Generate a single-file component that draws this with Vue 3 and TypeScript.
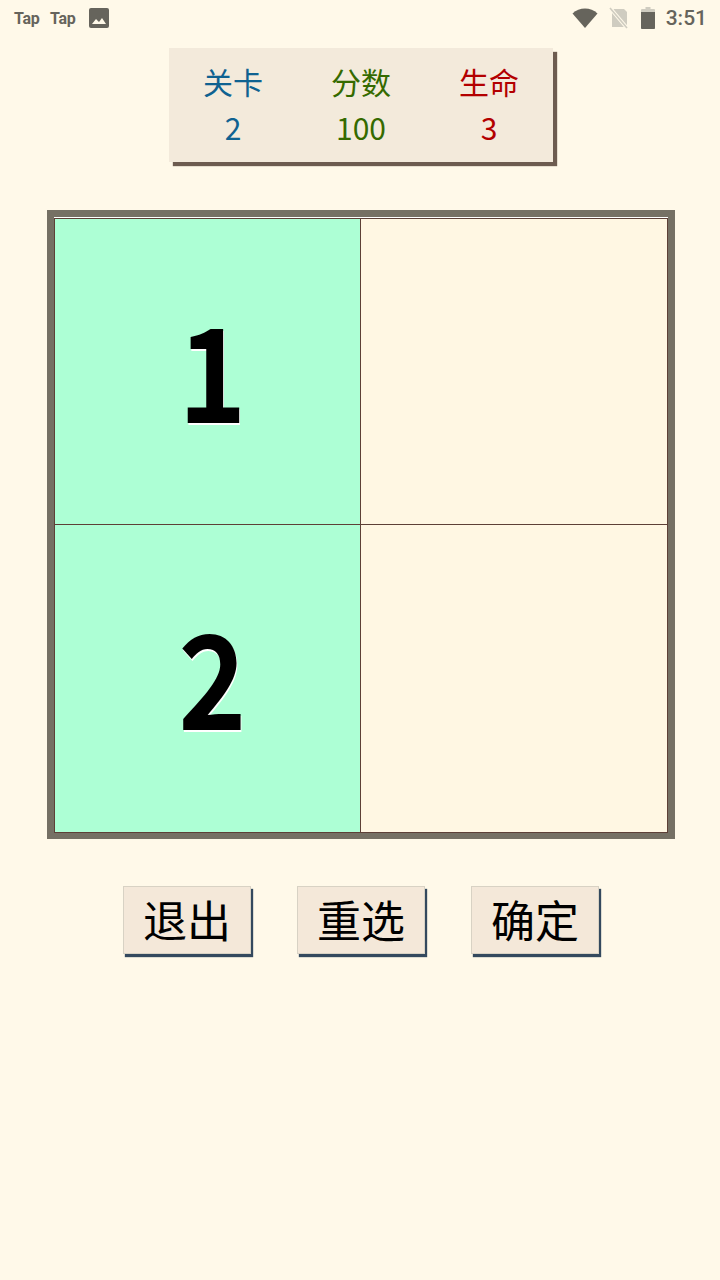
<script setup lang="ts">
const stats = [
  { label: '关卡', value: '2', cls: 'blue' },
  { label: '分数', value: '100', cls: 'green' },
  { label: '生命', value: '3', cls: 'red' },
]
const cells = [
  { text: '1', on: true },
  { text: '', on: false },
  { text: '2', on: true },
  { text: '', on: false },
]
const buttons = ['退出', '重选', '确定']
</script>

<template>
  <div class="page">
    <div class="status">
      <div class="left">
        <span class="tap">Tap</span>
        <span class="tap">Tap</span>
        <svg class="pic" width="22" height="22" viewBox="0 0 22 22">
          <path d="M3 1h16a2 2 0 0 1 2 2v16a2 2 0 0 1-2 2H3a2 2 0 0 1-2-2V3a2 2 0 0 1 2-2z" fill="#66645c" />
          <path d="M4 17l4-5 3 3 3-4 4 6z" fill="#fff9e9" />
        </svg>
      </div>
      <div class="right">
        <svg width="26" height="20" viewBox="0 0 26 20"><path d="M0.5 5.500C4 2.300 8.300 0.500 13 0.500s9 1.800 12.500 5L13 20z" fill="#66645c" /></svg>
        <svg class="sim" width="20" height="24" viewBox="0 0 20 24">
          <path d="M5 3h10l3 3v15H3V5z" fill="#cfccc0" />
          <path d="M1 2l17 20" stroke="#fff9e9" stroke-width="3.500" />
          <path d="M1 2l17 20" stroke="#cfccc0" stroke-width="1.600" />
        </svg>
        <svg class="bat" width="14" height="22" viewBox="0 0 14 22">
          <path d="M4.500 0h5v2H13a1 1 0 0 1 1 1v18a1 1 0 0 1-1 1H1a1 1 0 0 1-1-1V3a1 1 0 0 1 1-1h3.500z" fill="#cfccc0" />
          <path d="M0 5h14v16a1 1 0 0 1-1 1H1a1 1 0 0 1-1-1z" fill="#66645c" />
        </svg>
        <span class="time">3:51</span>
      </div>
    </div>

    <div class="main">
      <div class="panel">
        <div v-for="s in stats" :key="s.label" class="stat" :class="s.cls">
          <div class="stat-label">{{ s.label }}</div>
          <div class="stat-value">{{ s.value }}</div>
        </div>
      </div>

      <div class="board">
        <div v-for="(c, i) in cells" :key="i" class="cell" :class="{ on: c.on }">
          <span v-if="c.text" class="digit">{{ c.text }}</span>
        </div>
      </div>

      <div class="actions">
        <button v-for="b in buttons" :key="b" class="btn" type="button">{{ b }}</button>
      </div>
    </div>
  </div>
</template>

<style>
html, body { margin: 0; background: #fff9e9; }
</style>

<style scoped>
.page {
  width: 720px;
  height: 1280px;
  background: #fff9e9;
  display: flex;
  flex-direction: column;
  font-family: "Noto Sans CJK SC", "Noto Sans", sans-serif;
  overflow: hidden;
}
.main {
  display: flex;
  flex-direction: column;
  align-items: center;
  padding-left: 2px;
}
.status {
  width: 100%;
  height: 36px;
  box-sizing: border-box;
  padding: 0 13px 0 14px;
  display: flex;
  justify-content: space-between;
  align-items: center;
  color: #66645c;
}
.left, .right { display: flex; align-items: center; }
.tap {
  font-family: Roboto, sans-serif;
  font-weight: 700;
  font-size: 16px;
  letter-spacing: -0.3px;
  width: 36px;
}
.pic { margin-left: 2px; }
.right svg { flex: none; }
.sim { margin-left: 11px; }
.bat { margin-left: 12px; }
.time {
  font-family: Roboto, sans-serif;
  font-size: 21px;
  font-weight: 500;
  margin-left: 11px;
  color: #66645c;
}
.panel {
  margin-top: 12px;
  width: 384px;
  height: 114px;
  background: #f3eadb;
  box-shadow: 4px 4px 1px #6d5c50;
  display: flex;
  justify-content: center;
  box-sizing: border-box;
  padding-top: 11px;
}
.stat {
  width: 128px;
  text-align: center;
  font-size: 30px;
  line-height: 45px;
}
.stat-value { margin-top: 1px; }
.blue { color: #0f6291; }
.green { color: #356a00; }
.red { color: #b30000; }
.board {
  margin-top: 48px;
  width: 628px;
  height: 629px;
  box-sizing: border-box;
  border: 7px solid #757064;
  background: #fff;
  display: grid;
  grid-template-columns: 307px 307px;
  grid-template-rows: 307px 308px;
  padding-top: 1px;
}
.cell {
  background: #fff7e3;
  border: 1px solid #5d4037;
  box-sizing: border-box;
  display: flex;
  align-items: center;
  justify-content: center;
}
.cell:nth-child(even) { border-left: 0; }
.cell:nth-child(n+3) { border-top: 0; }
.cell.on { background: #adffd5; }
.digit {
  font-size: 130px;
  font-weight: 700;
  line-height: 1;
  color: #000;
  text-shadow: 1px 2px 0 #fff;
  transform: translate(5px, -6px) scaleX(0.89);
}
.actions {
  margin-top: 47px;
  display: flex;
  gap: 46px;
}
.btn {
  width: 128px;
  height: 68px;
  padding: 0 0 2px;
  border: 1px solid #d8d2c4;
  border-radius: 0;
  background: #f4e8d9;
  box-shadow: 2px 3px 1px #34495e;
  color: #000;
  font-family: "Noto Sans CJK SC", "Noto Sans", sans-serif;
  font-size: 44px;
  line-height: 1;
}
</style>
